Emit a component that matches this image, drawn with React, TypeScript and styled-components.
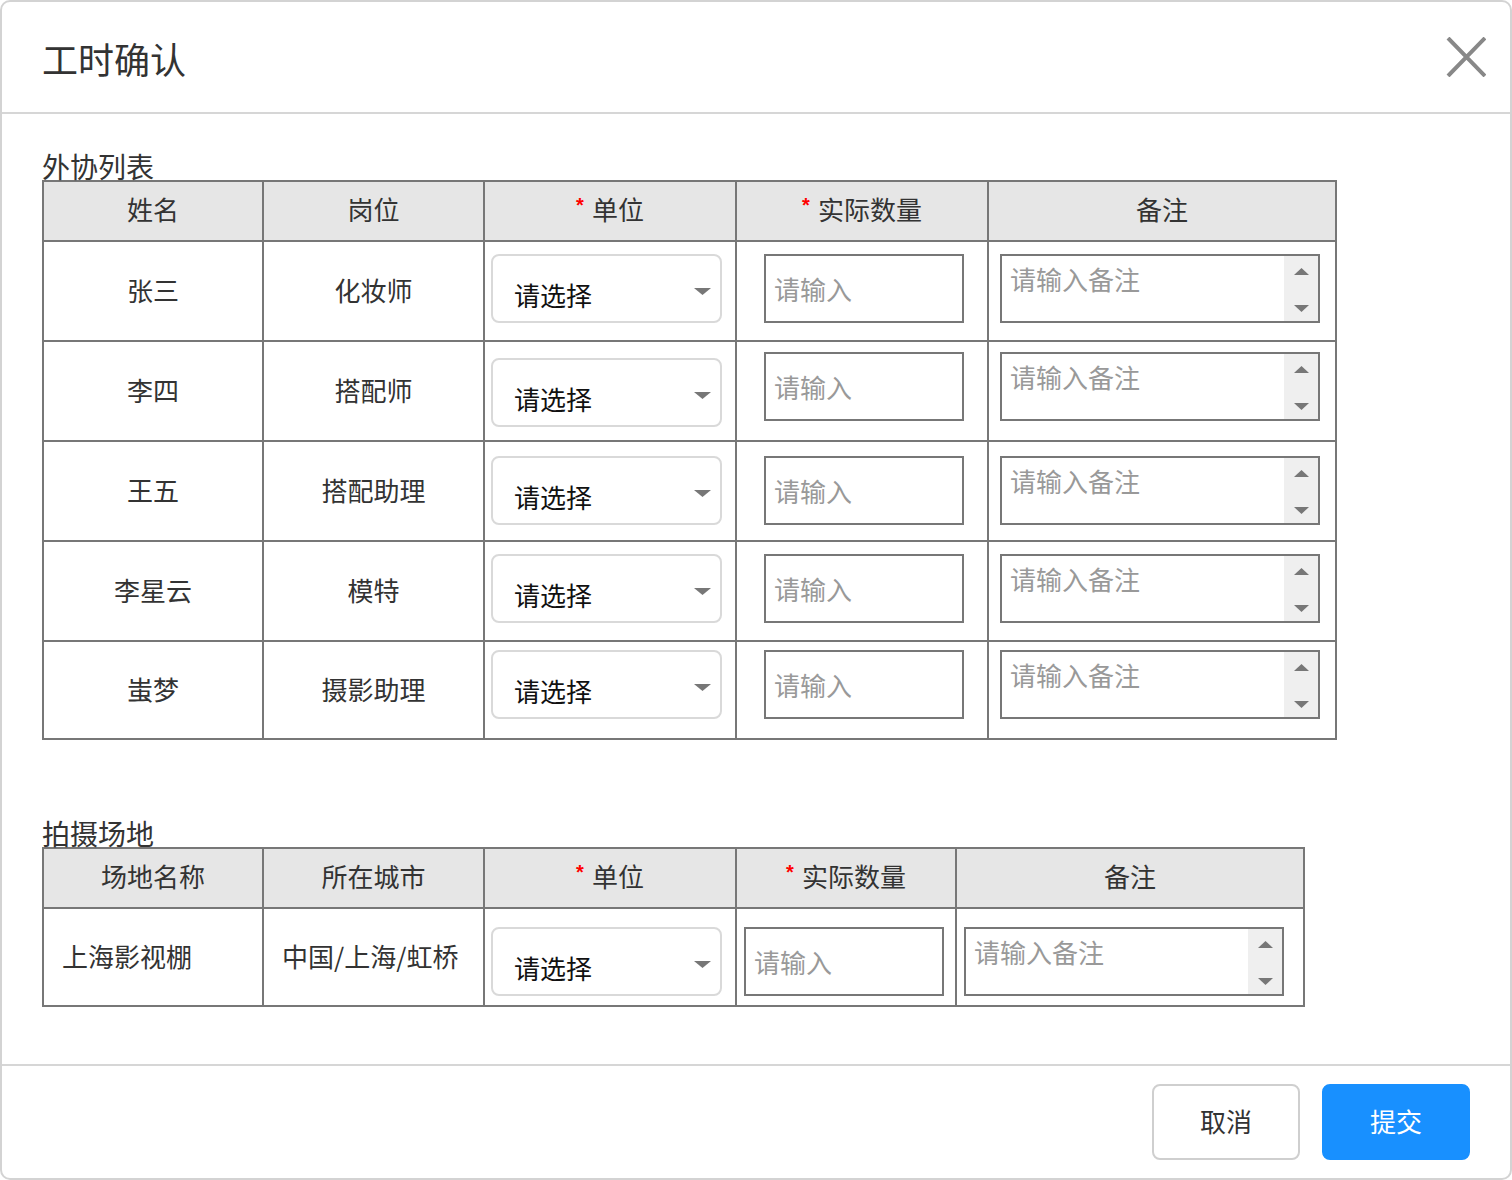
import React from "react";
import styled, { createGlobalStyle } from "styled-components";

const GlobalStyle = createGlobalStyle`
  * { box-sizing: border-box; }
  html, body { margin: 0; padding: 0; background: #fff; }
  body {
    font-family: "Noto Sans CJK SC", "Noto Sans", sans-serif;
    color: #333;
  }
`;

const Modal = styled.div`
  width: 1512px;
  height: 1180px;
  display: flex;
  flex-direction: column;
  border: 2px solid #d3d3d3;
  border-radius: 10px;
  background: #fff;
  overflow: hidden;
`;

const Header = styled.header`
  flex: none;
  height: 112px;
  border-bottom: 2px solid #d6d6d6;
  display: flex;
  align-items: center;
  justify-content: space-between;
  padding: 0 24px 0 40px;
`;

const Title = styled.h1`
  margin: 0;
  padding-top: 2px;
  font-size: 36px;
  font-weight: 400;
  line-height: 1;
  color: #333;
`;

const CloseButton = styled.button`
  width: 40px;
  height: 40px;
  padding: 0;
  border: none;
  background: none;
  display: flex;
  cursor: pointer;
`;

const Body = styled.main`
  flex: 1;
  padding: 38px 40px 0 40px;
`;

const SectionLabel = styled.div<{ $top: number }>`
  margin-top: ${(p) => p.$top}px;
  font-size: 28px;
  line-height: 28px;
  color: #333;
`;

const Grid = styled.div<{ $cols: string; $rows: string }>`
  display: grid;
  grid-template-columns: ${(p) => p.$cols};
  grid-template-rows: ${(p) => p.$rows};
  gap: 2px;
  width: fit-content;
  background: #777;
  border: 2px solid #777;
`;

const HeadCell = styled.div`
  background: #e6e6e6;
  display: flex;
  align-items: center;
  justify-content: center;
  padding-bottom: 5px;
  font-size: 26px;
  color: #333;
`;

const Req = styled.span`
  color: #f00;
  font-family: "Liberation Sans", Arial, sans-serif;
  font-weight: 700;
  font-size: 20px;
  margin-right: 8px;
  position: relative;
  top: -3px;
`;

const TextCell = styled.div<{ $left?: boolean }>`
  background: #fff;
  display: flex;
  align-items: center;
  justify-content: ${(p) => (p.$left ? "flex-start" : "center")};
  padding-left: ${(p) => (p.$left ? "18px" : "0")};
  padding-bottom: 4px;
  font-size: 26px;
  color: #333;
`;

const FieldCell = styled.div<{ $top: number; $left: number }>`
  background: #fff;
  display: flex;
  align-items: flex-start;
  padding-top: ${(p) => p.$top}px;
  padding-left: ${(p) => p.$left}px;
`;

const SelectBox = styled.div`
  width: 231px;
  height: 69px;
  border: 2px solid #d9d9d9;
  border-radius: 8px;
  display: flex;
  align-items: center;
  justify-content: space-between;
  padding: 12px 9px 0 21px;
  font-size: 26px;
  color: #111;
  cursor: pointer;
`;

const Caret = styled.svg`
  margin-top: -6px;
  flex: none;
`;

const TextInput = styled.input`
  width: 200px;
  height: 69px;
  border: 2px solid #777;
  border-radius: 0;
  padding: 0 8px;
  font-family: inherit;
  font-size: 26px;
  color: #333;
  outline: none;
  &::placeholder { color: #999; }
`;

const NoteBox = styled.div`
  width: 320px;
  height: 69px;
  border: 2px solid #777;
  display: flex;
`;

const NoteArea = styled.textarea`
  flex: 1;
  border: none;
  resize: none;
  outline: none;
  padding: 5px 8px 0 8px;
  font-family: inherit;
  font-size: 26px;
  line-height: 36px;
  color: #333;
  overflow: hidden;
  &::placeholder { color: #999; }
`;

const Spinner = styled.div`
  width: 34px;
  flex: none;
  background: #efefef;
  display: flex;
  flex-direction: column;
  align-items: center;
  justify-content: space-between;
  padding: 12px 0 9px;
`;

const Footer = styled.footer`
  flex: none;
  height: 114px;
  border-top: 2px solid #d6d6d6;
  display: flex;
  align-items: center;
  justify-content: flex-end;
  gap: 22px;
  padding: 0 40px 0 0;
`;

const Button = styled.button<{ $primary?: boolean }>`
  width: 148px;
  height: 76px;
  border-radius: 8px;
  border: 2px solid ${(p) => (p.$primary ? "#1890ff" : "#cfcfcf")};
  background: ${(p) => (p.$primary ? "#1890ff" : "#fff")};
  color: ${(p) => (p.$primary ? "#fff" : "#333")};
  font-family: inherit;
  font-size: 26px;
  padding: 0 0 3px;
  cursor: pointer;
`;

const Arrow = ({ dir }: { dir: "up" | "down" }) => (
  <svg width="15" height="7" viewBox="0 0 15 7">
    <polygon
      points={dir === "up" ? "0,7 15,7 7.5,0" : "0,0 15,0 7.5,7"}
      fill="#777"
    />
  </svg>
);

const Select = () => (
  <SelectBox>
    <span>请选择</span>
    <Caret width="17" height="7" viewBox="0 0 17 7">
      <polygon points="0,0 17,0 8.5,7" fill="#777" />
    </Caret>
  </SelectBox>
);

const Note = () => (
  <NoteBox>
    <NoteArea placeholder="请输入备注" />
    <Spinner>
      <Arrow dir="up" />
      <Arrow dir="down" />
    </Spinner>
  </NoteBox>
);

const crew = [
  { name: "张三", role: "化妆师", selTop: 12, inTop: 12 },
  { name: "李四", role: "搭配师", selTop: 16, inTop: 10 },
  { name: "王五", role: "搭配助理", selTop: 14, inTop: 14 },
  { name: "李星云", role: "模特", selTop: 12, inTop: 12 },
  { name: "蚩梦", role: "摄影助理", selTop: 8, inTop: 8 },
];

const venues = [{ name: "上海影视棚", city: "中国/上海/虹桥", top: 18 }];

export default function App() {
  return (
    <>
      <GlobalStyle />
      <Modal>
        <Header>
          <Title>工时确认</Title>
          <CloseButton aria-label="关闭">
            <svg width="40" height="40" viewBox="0 0 40 40">
              <path d="M2 1 L39 39 M39 1 L2 39" stroke="#888" strokeWidth="4" />
            </svg>
          </CloseButton>
        </Header>
        <Body>
          <SectionLabel $top={0}>外协列表</SectionLabel>
          <Grid
            $cols="218px 219px 250px 250px 346px"
            $rows="58px 98px 98px 98px 98px 96px"
          >
            <HeadCell>姓名</HeadCell>
            <HeadCell>岗位</HeadCell>
            <HeadCell>
              <Req>*</Req>单位
            </HeadCell>
            <HeadCell>
              <Req>*</Req>实际数量
            </HeadCell>
            <HeadCell>备注</HeadCell>
            {crew.map((r) => (
              <React.Fragment key={r.name}>
                <TextCell>{r.name}</TextCell>
                <TextCell>{r.role}</TextCell>
                <FieldCell $top={r.selTop} $left={6}>
                  <Select />
                </FieldCell>
                <FieldCell $top={r.inTop} $left={27}>
                  <TextInput placeholder="请输入" />
                </FieldCell>
                <FieldCell $top={r.inTop} $left={11}>
                  <Note />
                </FieldCell>
              </React.Fragment>
            ))}
          </Grid>

          <SectionLabel $top={79}>拍摄场地</SectionLabel>
          <Grid $cols="218px 219px 250px 218px 346px" $rows="58px 96px">
            <HeadCell>场地名称</HeadCell>
            <HeadCell>所在城市</HeadCell>
            <HeadCell>
              <Req>*</Req>单位
            </HeadCell>
            <HeadCell>
              <Req>*</Req>实际数量
            </HeadCell>
            <HeadCell>备注</HeadCell>
            {venues.map((v) => (
              <React.Fragment key={v.name}>
                <TextCell $left>{v.name}</TextCell>
                <TextCell $left>{v.city}</TextCell>
                <FieldCell $top={v.top} $left={6}>
                  <Select />
                </FieldCell>
                <FieldCell $top={v.top} $left={7}>
                  <TextInput placeholder="请输入" />
                </FieldCell>
                <FieldCell $top={v.top} $left={7}>
                  <Note />
                </FieldCell>
              </React.Fragment>
            ))}
          </Grid>
        </Body>
        <Footer>
          <Button>取消</Button>
          <Button $primary>提交</Button>
        </Footer>
      </Modal>
    </>
  );
}
